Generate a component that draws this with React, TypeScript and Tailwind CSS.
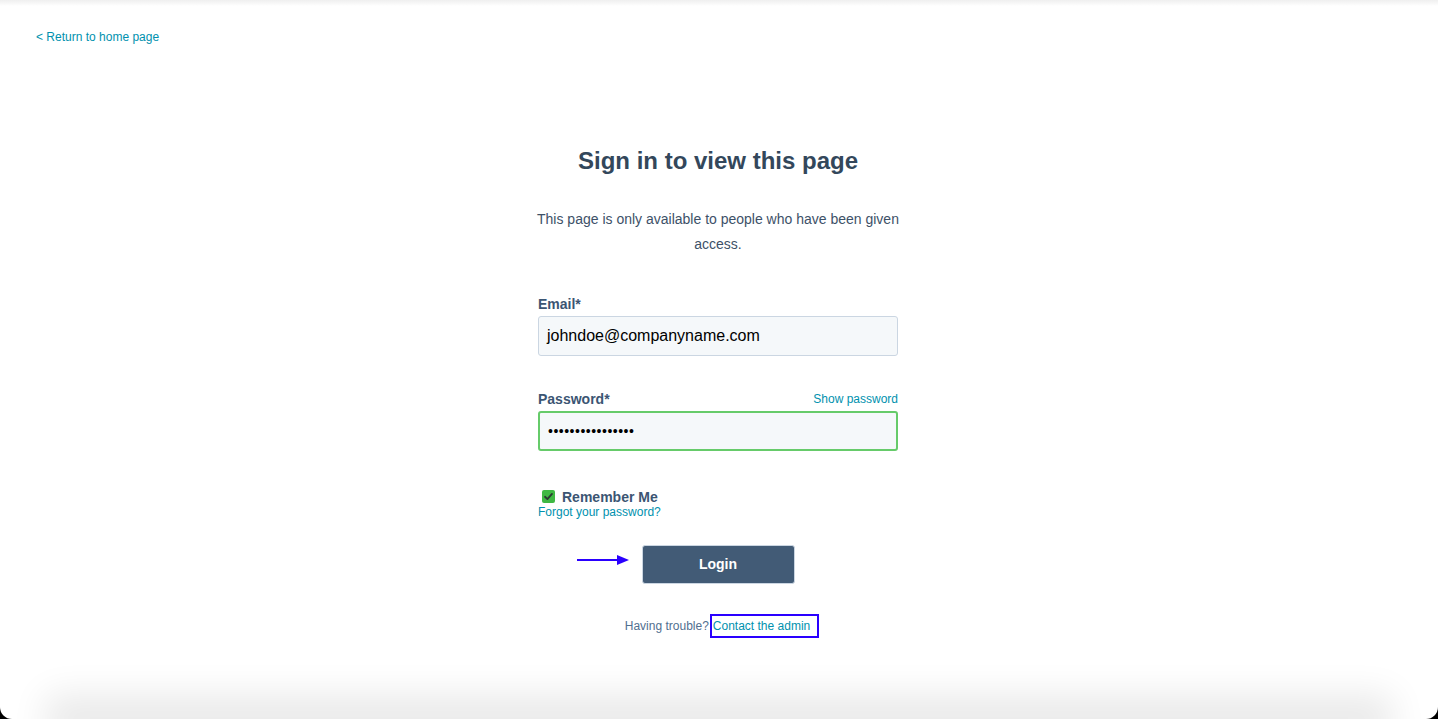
import React from "react";

const font = "font-['Liberation_Sans',Arial,sans-serif]";

// Small green checkbox with dark tick
const CheckBox = () => (
  <span className="flex h-[13px] w-[13px] items-center justify-center rounded-[2px] bg-[#3fb843]">
    <svg width="11" height="11" viewBox="0 0 12 12">
      <path
        d="M2.2 6.3 L4.8 8.8 L9.8 3.2"
        fill="none"
        stroke="#2b3a33"
        strokeWidth="2"
        strokeLinecap="round"
        strokeLinejoin="round"
      />
    </svg>
  </span>
);

// Blue annotation arrow pointing at the login button
const Arrow = () => (
  <svg width="52" height="12" viewBox="0 0 52 12">
    <line x1="0" y1="6" x2="42" y2="6" stroke="#2a00ff" strokeWidth="2" />
    <polygon points="40,1 52,6 40,11" fill="#2a00ff" />
  </svg>
);

export default function App() {
  return (
    <div className={`h-[719px] w-full overflow-hidden bg-black ${font}`}>
      <div className="flex h-full flex-col rounded-b-[12px] bg-white">
        {/* faint top edge shadow */}
        <div className="h-[6px] bg-gradient-to-b from-[#efefef] to-white" />

        {/* top link */}
        <div className="pl-[36px] pt-[23px] text-[12px] leading-[16px] text-[#0091ae]">
          <a href="#">&lt; Return to home page</a>
        </div>

        {/* sign in form */}
        <div className="flex justify-center pr-[2px]">
          <div className="mt-[100px] flex w-[360px] flex-col text-[#33475b]">
            <h1 className="text-center text-[24px] font-bold leading-[32px]">
              Sign in to view this page
            </h1>
            <p className="-mx-[12px] mt-[30px] text-center text-[14px] leading-[25px] text-[#3d5168]">
              This page is only available to people who have been given access.
            </p>

            <label className="mt-[37px] text-[14px] font-bold leading-[20px] text-[#3b5573]">
              Email*
            </label>
            <div className="mt-[2px] flex h-[40px] items-center rounded-[3px] border border-[#cbd6e2] bg-[#f5f8fa] px-[8px] text-[16px] text-black">
              johndoe@companyname.com
            </div>

            <div className="mt-[33px] flex items-center justify-between leading-[20px]">
              <span className="text-[14px] font-bold text-[#3b5573]">Password*</span>
              <a href="#" className="text-[12px] text-[#0091ae]">
                Show password
              </a>
            </div>
            <div className="mt-[2px] flex h-[40px] items-center rounded-[3px] border-2 border-[#66cb6a] bg-[#f5f8fa] px-[8px] text-[14px] tracking-[0.5px] text-black">
              ••••••••••••••••
            </div>

            <div className="mt-[34px] flex items-center gap-[7px] pl-[4px] leading-[20px]">
              <CheckBox />
              <span className="mt-[2px] text-[14px] font-bold text-[#3b5573]">Remember Me</span>
            </div>
            <a href="#" className="-mt-[2px] text-[12px] leading-[14px] text-[#0091ae]">
              Forgot your password?
            </a>

            <div className="relative mt-[26px] flex justify-center">
              <div className="absolute left-[39px] top-[9px]">
                <Arrow />
              </div>
              <button className="h-[39px] w-[153px] rounded-[3px] border border-[#cbd6e2] bg-[#425b76] text-[14px] font-bold text-white">
                Login
              </button>
            </div>

            <div className="mt-[30px] flex items-center justify-center pl-[8px] text-[12px] leading-[20px]">
              <span className="text-[#516f90]">Having trouble?</span>
              <a
                href="#"
                className="ml-[1px] border-2 border-[#2a00ff] pl-[1px] pr-[7px] text-[#0091ae]"
              >
                Contact the admin
              </a>
            </div>
          </div>
        </div>

        {/* soft shadow along the bottom edge */}
        <div className="mx-[70px] mt-auto h-0 shadow-[0_0_36px_24px_rgba(0,0,0,0.09)]" />
      </div>
    </div>
  );
}
